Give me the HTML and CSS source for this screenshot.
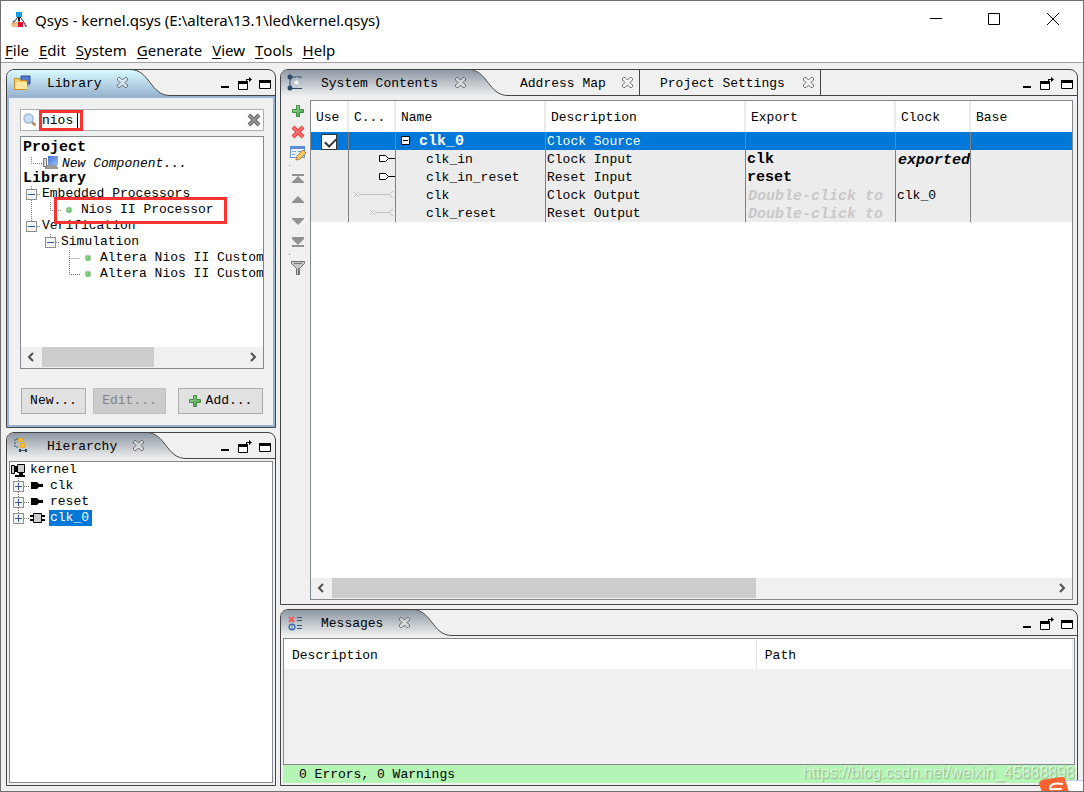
FILE: index.html
```html
<!DOCTYPE html>
<html lang="en">
<head>
<meta charset="utf-8">
<title>Qsys - kernel.qsys</title>
<link rel="stylesheet" href="styles.css">
</head>
<body>
<svg class="defs" width="0" height="0" aria-hidden="true">
  <defs>
    <linearGradient id="g-blue" x1="0" y1="0" x2="0" y2="1"><stop offset="0" stop-color="#d9fbff"/><stop offset="1" stop-color="#99b4d1"/></linearGradient>
    <linearGradient id="g-gray" x1="0" y1="0" x2="0" y2="1"><stop offset="0" stop-color="#8d98a3"/><stop offset="1" stop-color="#f0f0f0"/></linearGradient>
    <linearGradient id="g-screen" x1="0" y1="0" x2="1" y2="1"><stop offset="0" stop-color="#3a6fd0"/><stop offset="1" stop-color="#9cc4f6"/></linearGradient>
    <linearGradient id="g-plus" x1="0" y1="0" x2="1" y2="1"><stop offset="0" stop-color="#a5dc9a"/><stop offset="1" stop-color="#3f9a48"/></linearGradient>
    <symbol id="close" viewBox="0 0 11 11"><path d="M1.500.5h1.500l2.500 2.500L8 .5h1.500l1 1V3L8 5.500 10.500 8v1.500l-1 1H8L5.500 8 3 10.500H1.500l-1-1V8L3 5.500.5 3V1.500z" fill="#fff" fill-opacity=".35" stroke="#686868"/></symbol>
    <symbol id="min" viewBox="0 0 14 14"><path d="M3 9h8v2H3z" fill="#000"/></symbol>
    <symbol id="float" viewBox="0 0 14 14"><path d="M.5 5.500h9v7h-9z" fill="#fff" stroke="#000"/><path d="M0 4h10v3H0zM8 2h3V0l3 2.500L11 5V3H9v2H8z" fill="#000"/></symbol>
    <symbol id="max" viewBox="0 0 14 14"><path d="M1.500 3.500h11v8h-11z" fill="#fff" stroke="#000"/><path d="M1 3h12v3H1z" fill="#000"/></symbol>
    <symbol id="plus" viewBox="0 0 12 12"><path d="M4.500.5h3v4h4v3h-4v4h-3v-4h-4v-3h4z" fill="url(#g-plus)" stroke="#3f8a44"/></symbol>
    <symbol id="left" viewBox="0 0 8 10"><path d="M6 1 2 5l4 4" fill="none" stroke="#505050" stroke-width="2"/></symbol>
    <symbol id="right" viewBox="0 0 8 10"><path d="M2 1 6 5 2 9" fill="none" stroke="#505050" stroke-width="2"/></symbol>
    <symbol id="dot" viewBox="0 0 8 8"><circle cx="4" cy="4" r="2.900" fill="#6fbf6f" stroke="#a8d8a8"/><circle cx="3.500" cy="3.500" r="1" fill="#a9e2a3"/></symbol>
    <symbol id="collapse" viewBox="0 0 11 11"><rect x=".5" y=".5" width="10" height="10" fill="#f4f4f4" stroke="#8f8f8f"/><path d="M2 5.500h7" stroke="#33579b"/></symbol>
    <symbol id="expand" viewBox="0 0 11 11"><rect x=".5" y=".5" width="10" height="10" fill="#f4f4f4" stroke="#8f8f8f"/><path d="M2 5.500h7M5.500 2v7" stroke="#33579b"/></symbol>
    <symbol id="pin" viewBox="0 0 14 16"><path d="M1 4h6l2 2h4v3H9l-2 2H1z" fill="#000"/></symbol>
    <symbol id="port" viewBox="0 0 16 18"><path d="M.5 5.500h6l3 3-3 3h-6zM9.500 8.500H16" fill="#fff" stroke="#000"/></symbol>
    <symbol id="curve" viewBox="0 0 40 26"><path class="curve-fill" d="M0 0C20 0 20 25.500 40 25.500V26H0z"/><path d="M0-.5C20-.5 20 25.500 40 25.500" fill="none" stroke="#444"/></symbol>
  </defs>
</svg>

<div class="window">
  <header class="titlebar">
    <svg width="16" height="16" viewBox="0 0 16 16"><path d="M7 5 3 10M8 5v6M9 5l4 5" stroke="#222" fill="none"/><path d="M5 0h6v5H5z" fill="#1b9be5"/><path d="M7 5h2v4H7z" fill="#223"/><path d="M7 10h5v5H7z" fill="#e01030"/><path d="M12 11h2v3h2M2 9l1 2" stroke="#333" fill="none"/><path d="M1 15v-4h2v4M4 15v-4h2v4" stroke="#ee8a3c" fill="none"/></svg>
    <h1>Qsys - kernel.qsys (E:\altera\13.1\led\kernel.qsys)</h1>
    <div class="window-buttons">
      <button aria-label="Minimize"><svg width="14" height="14"><path d="M1 5.500h12" stroke="#000"/></svg></button>
      <button aria-label="Maximize"><svg width="14" height="14"><path d="M1.500.5h11v11h-11z" fill="none" stroke="#000"/></svg></button>
      <button aria-label="Close"><svg width="14" height="14"><path d="m2 0 12 12M14 0 2 12" stroke="#000"/></svg></button>
    </div>
  </header>
  <nav class="menu">
    <button><u>F</u>ile</button><button><u>E</u>dit</button><button><u>S</u>ystem</button><button><u>G</u>enerate</button><button><u>V</u>iew</button><button><u>T</u>ools</button><button><u>H</u>elp</button>
  </nav>

  <main class="workspace">
    <div class="column side">
      <section class="panel library focused">
        <div class="tabs">
          <div class="tab active">
            <svg class="tab-icon" width="18" height="18" viewBox="0 0 18 18"><path d="M8 2h9v8H8z" fill="#4f7bd0" stroke="#2b4f99"/><path d="M11 12h5" stroke="#889"/><path d="M1.500 4.500h5l1 2h6v9h-12z" fill="#f4cc68" stroke="#c98c24"/><path d="M3 8h11v7H2z" fill="#fae7a0"/></svg>
            <span>Library</span><button class="close" aria-label="Close Library"><svg width="11" height="11"><use href="#close"/></svg></button>
          </div>
          <svg class="curve" width="40" height="26"><use href="#curve"/></svg>
          <div class="controls"><button aria-label="Minimize"><svg width="14" height="14"><use href="#min"/></svg></button><button aria-label="Float"><svg width="14" height="14"><use href="#float"/></svg></button><button aria-label="Maximize"><svg width="14" height="14"><use href="#max"/></svg></button></div>
        </div>
        <div class="library-body">
          <div class="search">
            <svg width="14" height="14" viewBox="0 0 14 14"><path d="m8.500 8.500 4 4" stroke="#b08a6a" stroke-width="2.500"/><circle cx="5.500" cy="5.500" r="4.500" fill="#c6e0fa" stroke="#a3b8d8" stroke-width="1.500"/></svg>
            <input type="text" value="nios" aria-label="Search library"><i class="caret"></i>
            <button aria-label="Clear"><svg width="14" height="14" viewBox="0 0 14 14"><path d="m2 2 10 10M12 2 2 12" stroke="#666" stroke-width="4"/><path d="m2 2 10 10M12 2 2 12" stroke="#929292" stroke-width="2"/></svg></button>
            <i class="mark mark-search"></i>
          </div>
          <div class="box">
            <div class="tree library-tree">
              <div class="row heading">Project</div>
              <div class="row"><svg width="39" height="16"><path class="dots" d="M10.500 1v6.500H22"/><path d="M22.500 2.500h3v8h-3z" fill="#ddd" stroke="#777"/><path d="M27 0h10v9H27z" fill="url(#g-screen)"/><path d="M26 9h10v2H26zM24 11h13v2H24z" fill="#999"/></svg><em>New Component...</em></div>
              <div class="row heading short">Library</div>
              <div class="row"><svg width="19" height="16"><path class="dots" d="M10.500 0v16M16 8.500h4"/><use href="#collapse" x="5" y="3" width="11" height="11"/></svg>Embedded Processors</div>
              <div class="row nios"><svg width="58" height="16"><path class="dots" d="M10.500 0v16M29.500 0v8.500H40"/><use href="#dot" x="44" y="4" width="8" height="8"/></svg>Nios II Processor<i class="mark mark-nios"></i></div>
              <div class="row"><svg width="19" height="16"><path class="dots" d="M10.500 0v3M16 8.500h4"/><use href="#collapse" x="5" y="3" width="11" height="11"/></svg>Verification</div>
              <div class="row"><svg width="38" height="16"><path class="dots" d="M29.500 0v3M35 8.500h4"/><use href="#collapse" x="24" y="3" width="11" height="11"/></svg>Simulation</div>
              <div class="row"><svg width="77" height="16"><path class="dots" d="M48.500 0v16M48.500 8.500H59"/><use href="#dot" x="63" y="4" width="8" height="8"/></svg>Altera Nios II Custom</div>
              <div class="row"><svg width="77" height="16"><path class="dots" d="M48.500 0v8.500H59"/><use href="#dot" x="63" y="4" width="8" height="8"/></svg>Altera Nios II Custom</div>
            </div>
            <div class="scrollbar"><button aria-label="Scroll left"><svg width="8" height="10"><use href="#left"/></svg></button><div class="track"><div class="thumb thumb-library"></div></div><button aria-label="Scroll right"><svg width="8" height="10"><use href="#right"/></svg></button></div>
          </div>
          <div class="actions"><button class="push new">New...</button><button class="push edit" disabled>Edit...</button><button class="push add"><svg width="12" height="12"><use href="#plus"/></svg>Add...</button></div>
        </div>
      </section>

      <section class="panel hierarchy">
        <div class="tabs">
          <div class="tab active">
            <svg class="tab-icon" width="18" height="18" viewBox="0 0 18 18"><path d="M5 2H2v8h3" fill="none" stroke="#38566f" stroke-dasharray="2 1"/><path d="M5.500 1.500h4v3h-4zM7.500 6.500h4v4h-4z" fill="#f5c63c" stroke="#e6a920"/><path d="M7 13.500h6" stroke="#2f4c66"/><path d="M6 12h2v3H6zM12 12h2v3h-2z" fill="#2f4c66"/></svg>
            <span>Hierarchy</span><button class="close" aria-label="Close Hierarchy"><svg width="11" height="11"><use href="#close"/></svg></button>
          </div>
          <svg class="curve" width="40" height="26"><use href="#curve"/></svg>
          <div class="controls"><button aria-label="Minimize"><svg width="14" height="14"><use href="#min"/></svg></button><button aria-label="Float"><svg width="14" height="14"><use href="#float"/></svg></button><button aria-label="Maximize"><svg width="14" height="14"><use href="#max"/></svg></button></div>
        </div>
        <div class="box tree hierarchy-tree">
          <div class="row"><svg width="20" height="16"><path d="M1.500 3.500h3v8h-3zM7.500 2.500h7v8h-7z" fill="#ccc" stroke="#000"/><path d="M5 4h2v6H5zM9 11h4v2H9zM5 13h10v2H5z" fill="#000"/></svg>kernel</div>
          <div class="row"><svg width="40" height="16"><path class="dots" d="M8.500 0v16M14 8.500h6"/><use href="#expand" x="3" y="3" width="11" height="11"/><use href="#pin" x="20" y="0" width="14" height="16"/></svg>clk</div>
          <div class="row"><svg width="40" height="16"><path class="dots" d="M8.500 0v16M14 8.500h6"/><use href="#expand" x="3" y="3" width="11" height="11"/><use href="#pin" x="20" y="0" width="14" height="16"/></svg>reset</div>
          <div class="row"><svg width="39" height="16"><path class="dots" d="M8.500 0v4M14 8.500h6"/><use href="#expand" x="3" y="3" width="11" height="11"/><path d="M20 6h15M20 10h15" stroke="#000" stroke-width="2"/><path d="M23.500 3.500h8v9h-8z" fill="#ccc" stroke="#000"/></svg><span class="selected">clk_0</span></div>
        </div>
      </section>
    </div>

    <div class="column main">
      <section class="panel system">
        <div class="tabs">
          <div class="tab active">
            <svg class="tab-icon" width="18" height="18" viewBox="0 0 18 18"><path d="M3 3v12M3 3h12M3 14.500h12" fill="none" stroke="#2f4c66"/><path d="M9.500 3v11M9 8.500h7" stroke="#a9c0e0"/><circle cx="3" cy="3" r="2.500" fill="#2f4c66"/><circle cx="3" cy="14" r="2.500" fill="#2f4c66"/><circle cx="9.500" cy="8.500" r="2" fill="#fff"/></svg>
            <span>System Contents</span><button class="close" aria-label="Close System Contents"><svg width="11" height="11"><use href="#close"/></svg></button>
          </div>
          <svg class="curve" width="40" height="26"><use href="#curve"/></svg>
          <div class="tab plain address"><span>Address Map</span><button class="close" aria-label="Close Address Map"><svg width="11" height="11"><use href="#close"/></svg></button></div>
          <div class="tab plain settings"><span>Project Settings</span><button class="close" aria-label="Close Project Settings"><svg width="11" height="11"><use href="#close"/></svg></button></div>
          <div class="controls"><button aria-label="Minimize"><svg width="14" height="14"><use href="#min"/></svg></button><button aria-label="Float"><svg width="14" height="14"><use href="#float"/></svg></button><button aria-label="Maximize"><svg width="14" height="14"><use href="#max"/></svg></button></div>
        </div>
        <div class="system-body">
          <div class="toolbar">
            <button aria-label="Add"><svg width="12" height="12"><use href="#plus"/></svg></button>
            <button aria-label="Remove"><svg width="14" height="14"><path d="m2 2 10 10M12 2 2 12" stroke="#e03c3c" stroke-width="4"/><path d="m2 2 10 10M12 2 2 12" stroke="#ff7070" stroke-width="2"/></svg></button>
            <button aria-label="Edit"><svg width="17" height="16"><path d="M1.500 1.500h14v11h-14z" fill="#eaf2fd" stroke="#6a93d4"/><path d="M1 1h15v3H1z" fill="#5f8cd6"/><path d="M3 6.500h4M3 9.500h3M9 6.500h4" stroke="#7aa0dc"/><path d="m7 15 1-4 6-6 3 3-6 6z" fill="#f6c866" stroke="#b98734"/></svg></button>
            <i class="dot"></i>
            <button aria-label="Move to top"><svg width="12" height="10"><path d="M0 0h12v2H0zM6 2l6 6v1H0V8z" fill="#929292"/></svg></button>
            <button aria-label="Move up"><svg width="12" height="8"><path d="m6 0 6 6v1H0V6z" fill="#929292"/></svg></button>
            <button aria-label="Move down"><svg width="12" height="8"><path d="m6 8 6-6V1H0v1z" fill="#929292"/></svg></button>
            <button aria-label="Move to bottom"><svg width="12" height="10"><path d="M0 8h12v2H0zM6 8l6-6V0H0v2z" fill="#929292"/></svg></button>
            <i class="dot"></i>
            <button aria-label="Filter"><svg width="14" height="16"><path d="M.5 1.500h13v2l-5 5v6h-3v-6l-5-5z" fill="#c8c8c8" stroke="#6e6e6e"/><path d="M3 3.500h8M7.500 8v6" stroke="#777"/></svg></button>
          </div>
          <div class="box table-box">
            <table class="contents">
              <colgroup><col class="c-use"><col class="c-con"><col class="c-name"><col class="c-desc"><col class="c-export"><col class="c-clock"><col></colgroup>
              <thead><tr><th>Use</th><th>C...</th><th>Name</th><th>Description</th><th>Export</th><th>Clock</th><th>Base</th></tr></thead>
              <tbody>
                <tr class="chosen"><td class="use"><input type="checkbox" checked aria-label="Use clk_0"></td><td></td><td class="parent"><svg width="9" height="9"><path d="M.5.5h8v8h-8z" fill="#fff" stroke="#000"/><path d="M2 4.500h5" stroke="#000"/></svg><b>clk_0</b></td><td>Clock Source</td><td></td><td></td><td></td></tr>
                <tr><td></td><td class="wire"><svg width="16" height="18"><use href="#port"/></svg></td><td class="child">clk_in</td><td>Clock Input</td><td><b>clk</b></td><td class="low"><b><em>exported</em></b></td><td></td></tr>
                <tr><td></td><td class="wire"><svg width="16" height="18"><use href="#port"/></svg></td><td class="child">clk_in_reset</td><td>Reset Input</td><td><b>reset</b></td><td></td><td></td></tr>
                <tr><td></td><td class="wire"><svg width="42" height="18"><path d="m1 6 5 5M6 6l-5 5M6 8.500h30M40 5l-4 3.500L40 12" fill="none" stroke="#c0c0c0"/></svg></td><td class="child">clk</td><td>Clock Output</td><td class="low hint"><b><em>Double-click to</em></b></td><td>clk_0</td><td></td></tr>
                <tr><td></td><td class="wire"><svg width="26" height="18"><path d="m1 6 5 5M6 6l-5 5M6 8.500h14M24 5l-4 3.500L24 12" fill="none" stroke="#c0c0c0"/></svg></td><td class="child">clk_reset</td><td>Reset Output</td><td class="low hint"><b><em>Double-click to</em></b></td><td></td><td></td></tr>
              </tbody>
            </table>
            <div class="scrollbar"><button aria-label="Scroll left"><svg width="8" height="10"><use href="#left"/></svg></button><div class="track"><div class="thumb thumb-system"></div></div><button aria-label="Scroll right"><svg width="8" height="10"><use href="#right"/></svg></button></div>
          </div>
        </div>
      </section>

      <section class="panel messages">
        <div class="tabs">
          <div class="tab active">
            <svg class="tab-icon" width="18" height="18" viewBox="0 0 18 18"><path d="m2 3 5 5M7 3 2 8" stroke="#ee5a5a" stroke-width="2"/><circle cx="5" cy="13" r="2.800" fill="#e4eefa" stroke="#3a6ea8" stroke-width="1.500"/><path d="M5 11v4" stroke="#3a6ea8"/><path d="M10 3.500h5M10 6.500h5M10 11.500h5M10 14.500h5" stroke="#38566f"/></svg>
            <span>Messages</span><button class="close" aria-label="Close Messages"><svg width="11" height="11"><use href="#close"/></svg></button>
          </div>
          <svg class="curve" width="40" height="26"><use href="#curve"/></svg>
          <div class="controls"><button aria-label="Minimize"><svg width="14" height="14"><use href="#min"/></svg></button><button aria-label="Float"><svg width="14" height="14"><use href="#float"/></svg></button><button aria-label="Maximize"><svg width="14" height="14"><use href="#max"/></svg></button></div>
        </div>
        <div class="box message-box">
          <table class="message-table"><thead><tr><th>Description</th><th>Path</th></tr></thead></table>
        </div>
        <div class="status">0 Errors, 0 Warnings</div>
      </section>
    </div>
  </main>
  <div class="watermark">https://blog.csdn.net/weixin_45888898</div>
  <div class="ime"><svg width="46" height="15" viewBox="0 0 46 15"><path d="M28 4h18v11H28z" fill="#fff"/><path d="M28 3.500h18" stroke="#bcd0ee"/><path d="M2 7q0-3 3-4L24 0q3-1 4 2l4 13H5z" fill="#ff6230"/><path d="M26 7Q15 5 13 10q-1 3 4 2h8" fill="none" stroke="#fff" stroke-width="2"/></svg></div>
</div>
</body>
</html>
```
FILE: styles.css
```css
* { box-sizing: border-box; }

body {
  margin: 0;
  color: #000;
  font: 13px/16px "Liberation Mono", monospace;
}

button {
  display: flex;
  align-items: center;
  justify-content: center;
  padding: 0;
  border: 0;
  background: none;
  color: inherit;
  font: inherit;
}

svg { display: block; flex: none; }
b { font-size: 15px; }
.defs { position: absolute; }

.window {
  position: relative;
  display: flex;
  flex-direction: column;
  min-height: 100vh;
  overflow: hidden;
  border: 1px solid #707070;
  background: #f0f0f0;
}

/* Title bar and menu */
.titlebar {
  display: flex;
  align-items: center;
  gap: 8px;
  height: 37px;
  padding-left: 10px;
  background: #fff;
}
.titlebar h1 {
  flex: 1;
  margin: 0;
  font: 15px/20px "Noto Sans", sans-serif;
  white-space: nowrap;
}
.window-buttons { display: flex; padding-right: 2px; }
.window-buttons button { width: 58px; height: 36px; }
.menu {
  display: flex;
  gap: 10px;
  height: 25px;
  padding: 0 4px;
  border-bottom: 1px solid #a0a0a0;
  background: #fff;
}
.menu button { font: 15px/24px "Noto Sans", sans-serif; }
.menu u { text-underline-offset: 2px; }

/* Workspace */
.workspace {
  flex: 1;
  display: flex;
  gap: 4px;
  padding: 6px 5px 5px;
}
.column { display: flex; flex-direction: column; gap: 4px; }
.side { width: 270px; flex: none; }
.main { flex: 1; min-width: 0; }

.panel {
  display: flex;
  flex-direction: column;
  border: 1px solid #444;
  border-radius: 8px 8px 0 0;
  overflow: hidden;
}
.hierarchy, .system { flex: 1; }

.tabs { display: flex; height: 26px; flex: none; }
.tab { display: flex; align-items: center; }
.tab span { flex: 1; padding-top: 2px; white-space: nowrap; }
.active {
  padding: 0 2px 0 6px;
  background: linear-gradient(#8d98a3, #f0f0f0);
}
.focused .active { background: linear-gradient(#d9fbff, #99b4d1); }
.tab-icon { margin-right: 16px; }
.curve-fill { fill: var(--tab-fill, url(#g-gray)); }
.focused { --tab-fill: url(#g-blue); }
.library .active { width: 123px; }
.hierarchy .active { width: 139px; }
.messages .active { width: 131px; }
.system .active { width: 187px; }
.plain { border-bottom: 1px solid #444; border-right: 1px solid #444; }
.address { width: 132px; padding: 0 6px 0 12px; }
.settings { width: 181px; padding: 0 6px 0 20px; }
.close { padding-bottom: 1px; }
.controls {
  flex: 1;
  display: flex;
  align-items: center;
  justify-content: flex-end;
  gap: 6px;
  padding: 3px 3px 0 0;
  border-bottom: 1px solid #444;
}

.box { border: 1px solid #828790; background: #fff; }

/* Library */
.library-body {
  display: flex;
  flex-direction: column;
  padding: 11px 9px 11px 11px;
  border: 2px solid #99b4d1;
}
.search {
  position: relative;
  display: flex;
  align-items: center;
  height: 22px;
  margin-bottom: 5px;
  padding: 0 2px;
  border: 1px solid #b0b0b0;
  background: #fff;
}
.search input {
  flex: 1;
  min-width: 0;
  padding: 2px 0 0 5px;
  border: 0;
  background: none;
  font: inherit;
  line-height: 18px;
  outline: none;
}
.caret { position: absolute; left: 56px; top: 3px; width: 1px; height: 15px; background: #000; }
.mark { position: absolute; border: 3px solid #fa3232; }
.mark-search { left: 18px; top: 0; width: 44px; height: 21px; }
.mark-nios { left: 33px; top: -5px; width: 173px; height: 27px; }

.tree .row {
  display: flex;
  align-items: center;
  height: 16px;
  white-space: nowrap;
}
.tree .heading { padding-left: 2px; font-weight: bold; font-size: 15px; }
.tree .short { height: 14px; }
.tree svg { overflow: visible; }
.tree .nios { position: relative; }
.dots { fill: none; stroke: #808080; stroke-dasharray: 1 1; }
.library-tree { height: 210px; padding: 3px 0; overflow: hidden; }
.library-tree .row > svg { margin-right: 2px; }

.scrollbar { display: flex; height: 21px; background: #f0f0f0; }
.scrollbar button { width: 20px; height: 20px; flex: none; }
.track { flex: 1; padding: 0 1px; }
.thumb { height: 20px; background: #cdcdcd; }
.thumb-library { width: 56%; }
.thumb-system { width: 59%; }

.actions { display: flex; padding: 19px 1px 0; }
.push {
  height: 26px;
  gap: 5px;
  border: 1px solid #adadad;
  background: #e1e1e1;
}
.new { width: 65px; margin-right: 7px; }
.edit { width: 73px; border-color: #bfbfbf; background: #ccc; color: #838383; }
.add { width: 85px; margin-left: auto; }

/* Hierarchy */
.hierarchy-tree { flex: 1; margin: 2px; }
.selected { padding: 0 3px 0 1px; background: #0078d7; color: #fff; }

/* System contents */
.system-body { flex: 1; display: flex; padding: 4px; }
.toolbar {
  display: flex;
  flex-direction: column;
  align-items: center;
  width: 25px;
}
.toolbar button { width: 20px; height: 21px; }
.toolbar .dot { align-self: flex-start; width: 1px; height: 1px; margin: 2px 4px; background: #888; }
.table-box { flex: 1; display: flex; flex-direction: column; min-width: 0; }
.table-box .scrollbar { margin-top: auto; }

table { width: 100%; border-collapse: separate; border-spacing: 0; table-layout: fixed; }
th { font-weight: normal; text-align: left; background: #fff; }
td, th { overflow: hidden; white-space: nowrap; }
.contents th { height: 31px; padding: 3px 0 0 5px; border-right: 2px solid #ebebeb; }
.contents td { height: 18px; padding: 2px 0 0 1px; border-right: 1px solid #808080; background: #ececec; line-height: 16px; }
.contents td b { line-height: 14px; }
.contents th:last-child, .contents td:last-child { border-right: 0; }
.c-use { width: 38px; }
.c-con { width: 47px; }
.c-name, .c-export { width: 150px; }
.c-desc { width: 200px; }
.c-clock { width: 75px; }
.contents .chosen td { background: #0078d7; color: #fff; }
.contents .use { padding: 1px 0 0 10px; }
.use input {
  display: block;
  width: 16px;
  height: 16px;
  margin: 0;
  border: 1px solid #333;
  background: #fff;
  appearance: none;
}
.use input:checked::after {
  content: "";
  display: block;
  width: 5px;
  height: 9px;
  margin: 1px 0 0 5px;
  border: solid #333;
  border-width: 0 2px 2px 0;
  transform: rotate(45deg);
}
.contents .parent { padding-left: 5px; }
.parent svg { display: inline-block; margin-right: 9px; }
.contents .child { padding-left: 30px; }
.contents .wire { padding: 0; }
.wire svg { margin-left: auto; }
.contents .low { padding: 4px 0 0 2px; line-height: 14px; }
.hint { color: #c8c8c8; }

/* Messages */
.message-box { min-height: 127px; margin: 2px 2px 0; background: #f0f0f0; }
.message-table { width: calc(100% - 2px); }
.message-table th { height: 30px; padding: 4px 8px 0; }
.message-table th:first-child { width: 60%; border-right: 1px solid #e5e5e5; }
.status { height: 18px; margin: 0 2px 2px; padding: 1px 0 0 16px; background: #b4f4b4; line-height: 18px; }

.watermark {
  position: absolute;
  right: 8px;
  bottom: 8px;
  color: rgba(255, 255, 255, .6);
  font: 16px/20px "Liberation Sans", sans-serif;
  text-shadow: 1px 1px 1px rgba(0, 0, 0, .25);
}
.ime { position: absolute; right: 0; bottom: -1px; }
```
